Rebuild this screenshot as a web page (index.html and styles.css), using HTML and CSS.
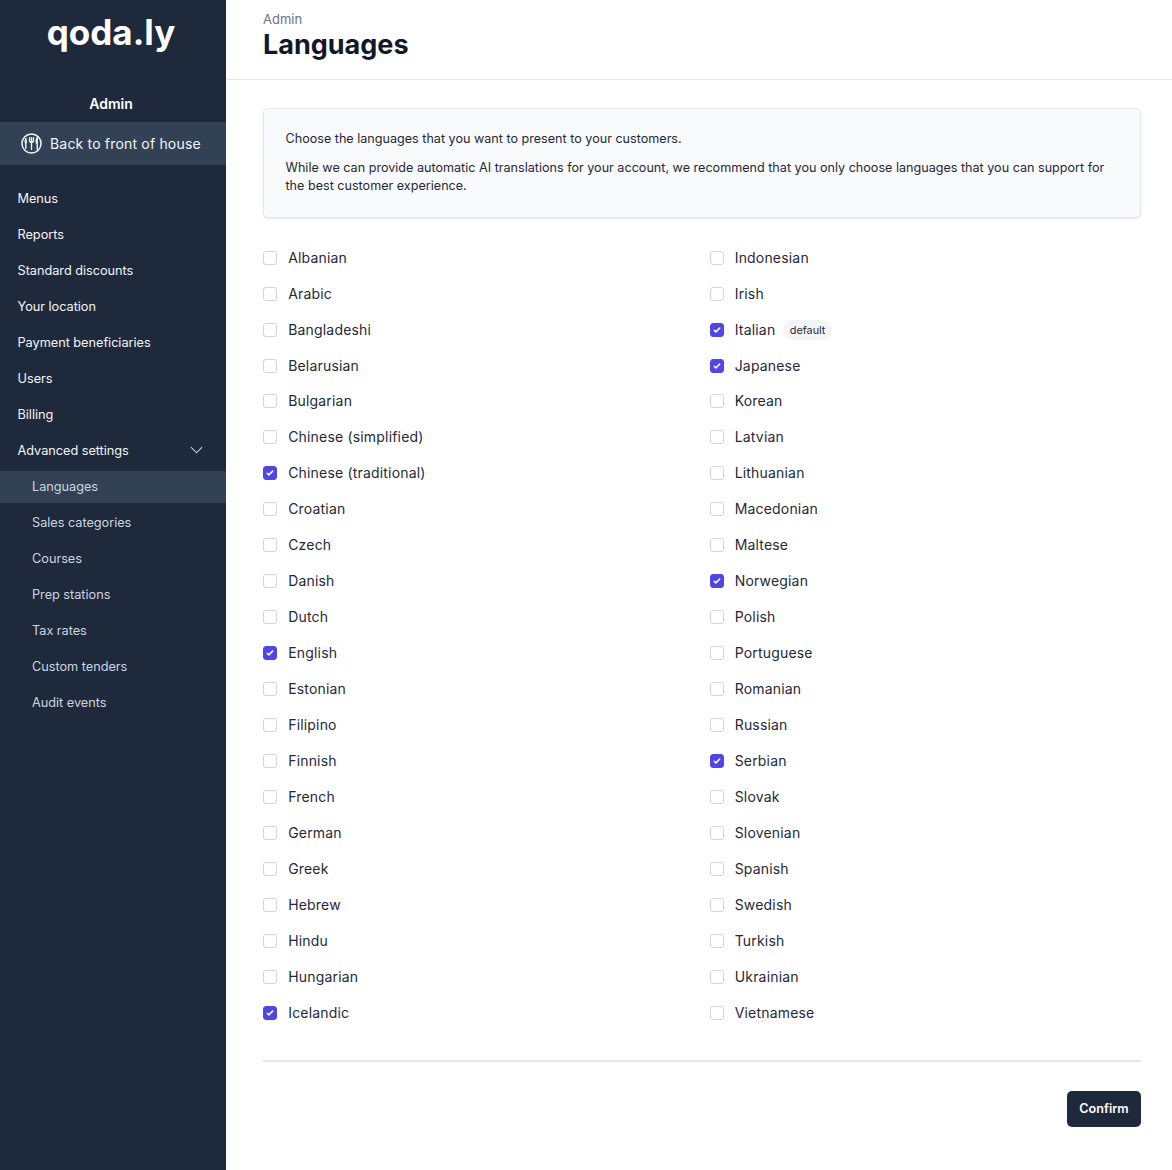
FILE: index.html
```html
<!DOCTYPE html>
<html lang="en">
<head>
<meta charset="utf-8">
<title>Languages</title>
<link rel="stylesheet" href="styles.css">
</head>
<body>
<div class="app">
  <aside class="sidebar">
    <div class="logo">qoda.ly</div>
    <div class="role">Admin</div>
    <a class="back">
      <svg class="back-icon" viewBox="0 0 22 22" fill="none" stroke="currentColor" stroke-linecap="round">
        <circle cx="11" cy="11" r="10" stroke-width="1.6"/>
        <path d="M5 6v10" stroke-width="1.5"/>
        <path d="M5 6c-.9 1-1 3-.6 4.5M5 6c.9 1 1 3 .6 4.5" stroke-width="1"/>
        <path d="M9 5v3.2c0 1.2.9 1.8 2 1.8s2-.6 2-1.8V5M11 5v12" stroke-width="1.4"/>
        <path d="M17 5v12M17 5c-1 1-1.2 4-.8 5.500h.8" stroke-width="1.5"/>
      </svg>
      <span>Back to front of house</span>
    </a>
    <nav class="nav">
      <a class="nav-item">Menus</a>
      <a class="nav-item">Reports</a>
      <a class="nav-item">Standard discounts</a>
      <a class="nav-item">Your location</a>
      <a class="nav-item">Payment beneficiaries</a>
      <a class="nav-item">Users</a>
      <a class="nav-item">Billing</a>
      <a class="nav-item nav-parent">
        <span>Advanced settings</span>
        <svg class="chev" viewBox="0 0 14 8" fill="none" stroke="currentColor" stroke-width="1.2"><path d="M1 1l6 6 6-6"/></svg>
      </a>
      <a class="nav-sub active">Languages</a>
      <a class="nav-sub">Sales categories</a>
      <a class="nav-sub">Courses</a>
      <a class="nav-sub">Prep stations</a>
      <a class="nav-sub">Tax rates</a>
      <a class="nav-sub">Custom tenders</a>
      <a class="nav-sub">Audit events</a>
    </nav>
  </aside>
  <main class="main">
    <header class="header">
      <div class="crumb">Admin</div>
      <h1 class="title">Languages</h1>
    </header>
    <section class="content">
      <div class="notice">
        <p>Choose the languages that you want to present to your customers.</p>
        <p>While we can provide automatic AI translations for your account, we recommend that you only choose languages that you can support for the best customer experience.</p>
      </div>
      <div class="langs">
        <label class="lang"><span class="box"></span>Albanian</label>
        <label class="lang"><span class="box"></span>Indonesian</label>
        <label class="lang"><span class="box"></span>Arabic</label>
        <label class="lang"><span class="box"></span>Irish</label>
        <label class="lang"><span class="box"></span>Bangladeshi</label>
        <label class="lang"><span class="box on"><svg viewBox="0 0 16 16"><path d="M12.207 4.793a1 1 0 010 1.414l-5 5a1 1 0 01-1.414 0l-2-2a1 1 0 011.414-1.414L6.500 9.086l4.293-4.293a1 1 0 011.414 0z"/></svg></span>Italian<span class="badge">default</span></label>
        <label class="lang"><span class="box"></span>Belarusian</label>
        <label class="lang"><span class="box on"><svg viewBox="0 0 16 16"><path d="M12.207 4.793a1 1 0 010 1.414l-5 5a1 1 0 01-1.414 0l-2-2a1 1 0 011.414-1.414L6.500 9.086l4.293-4.293a1 1 0 011.414 0z"/></svg></span>Japanese</label>
        <label class="lang"><span class="box"></span>Bulgarian</label>
        <label class="lang"><span class="box"></span>Korean</label>
        <label class="lang"><span class="box"></span>Chinese (simplified)</label>
        <label class="lang"><span class="box"></span>Latvian</label>
        <label class="lang"><span class="box on"><svg viewBox="0 0 16 16"><path d="M12.207 4.793a1 1 0 010 1.414l-5 5a1 1 0 01-1.414 0l-2-2a1 1 0 011.414-1.414L6.500 9.086l4.293-4.293a1 1 0 011.414 0z"/></svg></span>Chinese (traditional)</label>
        <label class="lang"><span class="box"></span>Lithuanian</label>
        <label class="lang"><span class="box"></span>Croatian</label>
        <label class="lang"><span class="box"></span>Macedonian</label>
        <label class="lang"><span class="box"></span>Czech</label>
        <label class="lang"><span class="box"></span>Maltese</label>
        <label class="lang"><span class="box"></span>Danish</label>
        <label class="lang"><span class="box on"><svg viewBox="0 0 16 16"><path d="M12.207 4.793a1 1 0 010 1.414l-5 5a1 1 0 01-1.414 0l-2-2a1 1 0 011.414-1.414L6.500 9.086l4.293-4.293a1 1 0 011.414 0z"/></svg></span>Norwegian</label>
        <label class="lang"><span class="box"></span>Dutch</label>
        <label class="lang"><span class="box"></span>Polish</label>
        <label class="lang"><span class="box on"><svg viewBox="0 0 16 16"><path d="M12.207 4.793a1 1 0 010 1.414l-5 5a1 1 0 01-1.414 0l-2-2a1 1 0 011.414-1.414L6.500 9.086l4.293-4.293a1 1 0 011.414 0z"/></svg></span>English</label>
        <label class="lang"><span class="box"></span>Portuguese</label>
        <label class="lang"><span class="box"></span>Estonian</label>
        <label class="lang"><span class="box"></span>Romanian</label>
        <label class="lang"><span class="box"></span>Filipino</label>
        <label class="lang"><span class="box"></span>Russian</label>
        <label class="lang"><span class="box"></span>Finnish</label>
        <label class="lang"><span class="box on"><svg viewBox="0 0 16 16"><path d="M12.207 4.793a1 1 0 010 1.414l-5 5a1 1 0 01-1.414 0l-2-2a1 1 0 011.414-1.414L6.500 9.086l4.293-4.293a1 1 0 011.414 0z"/></svg></span>Serbian</label>
        <label class="lang"><span class="box"></span>French</label>
        <label class="lang"><span class="box"></span>Slovak</label>
        <label class="lang"><span class="box"></span>German</label>
        <label class="lang"><span class="box"></span>Slovenian</label>
        <label class="lang"><span class="box"></span>Greek</label>
        <label class="lang"><span class="box"></span>Spanish</label>
        <label class="lang"><span class="box"></span>Hebrew</label>
        <label class="lang"><span class="box"></span>Swedish</label>
        <label class="lang"><span class="box"></span>Hindu</label>
        <label class="lang"><span class="box"></span>Turkish</label>
        <label class="lang"><span class="box"></span>Hungarian</label>
        <label class="lang"><span class="box"></span>Ukrainian</label>
        <label class="lang"><span class="box on"><svg viewBox="0 0 16 16"><path d="M12.207 4.793a1 1 0 010 1.414l-5 5a1 1 0 01-1.414 0l-2-2a1 1 0 011.414-1.414L6.500 9.086l4.293-4.293a1 1 0 011.414 0z"/></svg></span>Icelandic</label>
        <label class="lang"><span class="box"></span>Vietnamese</label>
      </div>
      <div class="actions">
        <button class="confirm" type="button">Confirm</button>
      </div>
    </section>
  </main>
</div>
</body>
</html>
```
FILE: styles.css
```css
* { box-sizing: border-box; }
html, body { margin: 0; padding: 0; }
body {
  font-family: Inter, "Liberation Sans", sans-serif;
  color: #111827;
  background: #fff;
  height: 1170px;
  overflow: hidden;
}
.app { display: flex; height: 1170px; }

.sidebar {
  width: 226px;
  flex: none;
  background: #1e293b;
  color: #fff;
  display: flex;
  flex-direction: column;
}
.logo {
  height: 56px;
  padding-top: 8px;
  padding-right: 4px;
  text-align: center;
  font-family: Inter, sans-serif;
  font-weight: 700;
  font-size: 35px;
  line-height: 48px;
}
.role {
  margin-top: 37px;
  height: 29px;
  padding-right: 4px;
  text-align: center;
  font-size: 14px;
  font-weight: 600;
  line-height: 22px;
}
.back {
  height: 43px;
  background: #334155;
  color: #f1f5f9;
  display: flex;
  align-items: center;
  gap: 8px;
  padding-left: 21px;
  font-size: 14px;
  letter-spacing: 0.18px;
}
.back-icon { width: 21px; height: 21px; flex: none; }
.nav { margin-top: 15px; display: flex; flex-direction: column; }
.nav-item, .nav-sub {
  height: 36px;
  display: flex;
  align-items: center;
  font-size: 12.750px;
  letter-spacing: -0.04px;
}
.nav-item { padding-left: 17.5px; color: #f1f5f9; font-weight: 400; }
.nav-parent { justify-content: space-between; padding-right: 23px; }
.chev { width: 13px; height: 8px; color: #cbd5e1; }
.nav-sub { padding-left: 32px; color: #cbd5e1; font-weight: 400; }
.nav-sub.active { background: #334155; height: 32px; margin: 3px 0 1px; padding-bottom: 2px; }

.main { flex: 1; min-width: 0; display: flex; flex-direction: column; }
.header {
  height: 80px;
  border-bottom: 1px solid #e5e7eb;
  padding: 10px 37px 0;
}
.crumb { font-size: 13px; line-height: 18px; color: #6b7280; }
.title { margin: 0; font-size: 27px; line-height: 34px; font-weight: 700; color: #111827; }

.content { padding: 28px 31px 0 37px; }
.notice {
  height: 110px;
  border: 1px solid #e5e7eb;
  border-radius: 5px;
  background: #f9fafb;
  box-shadow: 0 1px 2px rgba(0, 0, 0, 0.08);
  padding: 21px 21.500px;
  font-size: 12.600px;
  line-height: 18px;
  color: #1f2937;
}
.notice p { margin: 0 0 11px; }
.notice p:last-child { margin-bottom: 0; }

.langs {
  margin-top: 21.200px;
  display: grid;
  grid-template-columns: 446.500px 1fr;
  grid-auto-rows: 35.96px;
}
.lang {
  display: flex;
  align-items: center;
  font-size: 14px;
  letter-spacing: 0.18px;
  color: #1f2937;
}
.box {
  width: 14px;
  height: 14px;
  margin-top: 1px;
  margin-right: 11.200px;
  border: 1px solid #d1d5db;
  border-radius: 3px;
  background: #fff;
  flex: none;
  display: flex;
}
.box.on { background: #4f46e5; border-color: #4f46e5; }
.box svg { width: 100%; height: 100%; fill: #fff; display: block; }
.badge {
  margin-left: 8px;
  margin-top: 2px;
  height: 20px;
  padding: 0 6.500px;
  display: inline-flex;
  align-items: center;
  border-radius: 10px;
  background: #f3f4f6;
  font-size: 10.800px;
  letter-spacing: 0;
  color: #1f2937;
}
.actions {
  margin-top: 29.600px;
  border-top: 2px solid #e5e7eb;
  padding-top: 29px;
  display: flex;
  justify-content: flex-end;
}
.confirm {
  width: 74px;
  height: 36px;
  border: 0;
  border-radius: 5px;
  background: #1e293b;
  color: #fff;
  font-family: inherit;
  font-size: 12.600px;
  font-weight: 600;
  padding: 0;
}
```
